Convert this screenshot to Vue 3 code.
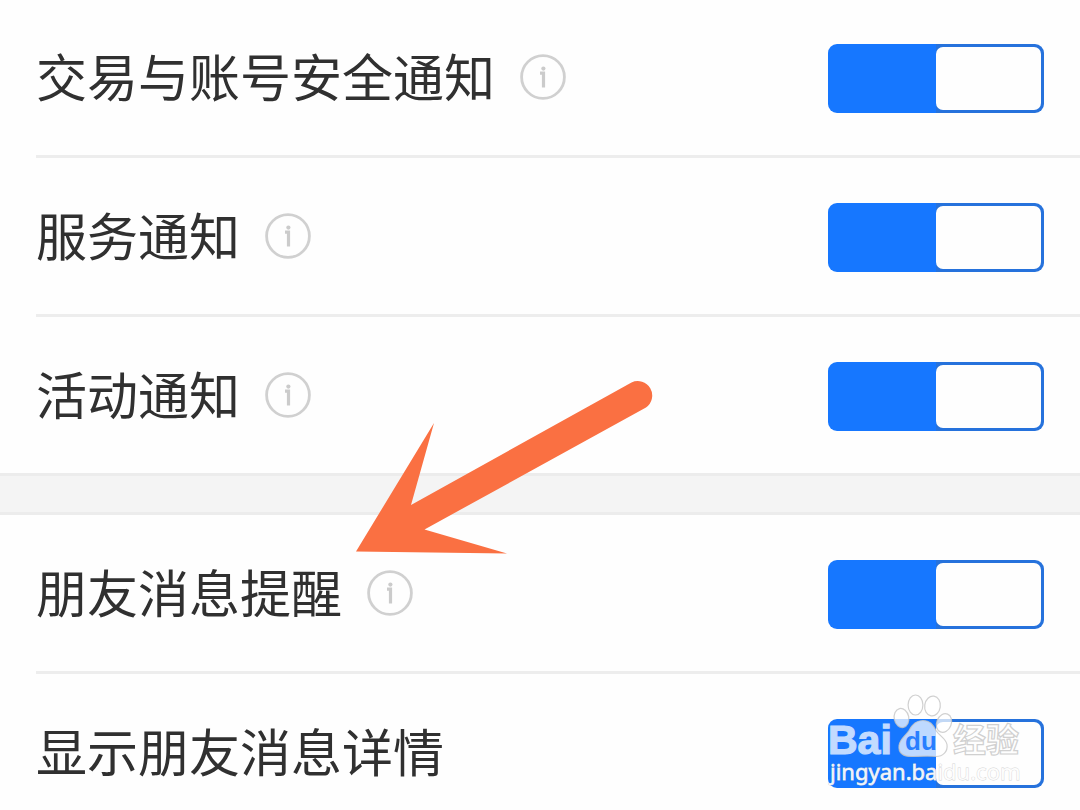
<script setup>
import { ref } from 'vue'

const groups = ref([
  [
    { id: 'trade', label: '交易与账号安全通知', info: true, on: true },
    { id: 'service', label: '服务通知', info: true, on: true },
    { id: 'activity', label: '活动通知', info: true, on: true },
  ],
  [
    { id: 'friend', label: '朋友消息提醒', info: true, on: true },
    { id: 'detail', label: '显示朋友消息详情', info: false, on: true, mark: true },
  ],
])
</script>

<template>
  <main class="page">
    <section v-for="(group, g) in groups" :key="g" class="group">
      <div v-for="row in group" :key="row.id" class="row">
        <label class="label" :for="row.id">{{ row.label }}</label>
        <button v-if="row.info" class="info" type="button" :aria-label="row.label">
          <svg viewBox="0 0 46 46" aria-hidden="true">
            <circle cx="23" cy="23" r="21.4" fill="none" stroke="#d0d0d0" stroke-width="2.8" />
            <circle cx="23.4" cy="14.6" r="2.1" fill="#cbcbcb" />
            <path d="M20 19.200h3.500V33.500" fill="none" stroke="#cbcbcb" stroke-width="3.2" />
          </svg>
        </button>
        <div class="control">
          <input :id="row.id" v-model="row.on" class="switch" type="checkbox" role="switch" />
          <svg v-if="row.mark" class="mark" viewBox="0 0 200 100">
            <g fill="#fff" fill-opacity="0.72" stroke="#c4c4c4" stroke-opacity="0.8" stroke-width="1.2">
              <ellipse cx="75.5" cy="26" rx="7.3" ry="9.6" transform="rotate(-12 75.5 26)" />
              <ellipse cx="89.5" cy="13" rx="7.4" ry="10" />
              <ellipse cx="106.5" cy="14" rx="7.8" ry="10" transform="rotate(8 106.5 14)" />
              <ellipse cx="118" cy="31" rx="7.3" ry="9.6" transform="rotate(22 118 31)" />
              <path d="M97 28.5c-7 0-11 4-14 10-3 5-9 8-10 15-1 8 5 11 12 11 6 0 18-1 25 0 7 0 12-5 11-12-1-6-8-9-11-14-3-6-6-10-13-10z" />
              <text class="cjk" x="127" y="60" font-size="33">经验</text>
            </g>
            <g fill="#fff" stroke="#fff" stroke-width="1.2" opacity="0.74">
              <text class="latin" x="2" y="62" font-size="41">Bai</text>
            </g>
            <text class="url" x="4" y="88" font-size="22" fill="#fff" fill-opacity="0.92" stroke="#d4d4d4" stroke-width="0.8" paint-order="stroke">jingyan.baidu.com</text>
            <text class="latin" x="79" y="58" font-size="26" fill="#287fff">du</text>
          </svg>
        </div>
      </div>
    </section>
    <svg class="arrow" viewBox="0 0 300 176" aria-hidden="true">
      <path d="M1 173.5 79 45 56 127 276.500 4.500A14.500 14.500 0 0 1 291 29.500L69.500 151.500 152 175.500Z" fill="#fa7042" />
    </svg>
  </main>
</template>

<style>
body {
  background: #fefefe;
}
</style>

<style scoped>
.page {
  position: relative;
  height: 100vh;
  overflow: hidden;
  background: #fefefe;
  color: #303030;
  font-family: "Noto Sans CJK SC", sans-serif;
}

.group:first-child {
  margin-top: -1px;
}

.group + .group::before {
  content: "";
  display: block;
  box-sizing: border-box;
  height: 42px;
  background: #f4f4f4;
  border: solid #ececec;
  border-width: 3px 0;
}

.row {
  display: flex;
  align-items: center;
  height: 156px;
  margin-left: 36px;
  padding-right: 36px;
}

.row + .row {
  border-top: 3px solid #ededed;
}

.label {
  padding-bottom: 4px;
  font-size: 51px;
  line-height: 72px;
  white-space: nowrap;
}

.info {
  width: 46px;
  height: 46px;
  margin-left: 25px;
  padding: 0;
  border: 0;
  background: none;
}

.info svg {
  display: block;
}

.control {
  position: relative;
  margin: 3px 0 0 auto;
}

.switch {
  display: block;
  appearance: none;
  box-sizing: border-box;
  width: 216px;
  height: 69px;
  margin: 0;
  padding: 3px;
  border-radius: 9px;
  background: linear-gradient(to right, #1677ff 50%, #2672dc 50%);
}

.switch::before {
  content: "";
  display: block;
  width: 50%;
  height: 100%;
  border-radius: 7px;
  background: #fefefe;
}

.switch:checked::before {
  margin-left: auto;
}

.mark {
  position: absolute;
  left: -2px;
  bottom: -4px;
  width: 200px;
  height: 100px;
  pointer-events: none;
}

.latin {
  font-family: "Liberation Sans", sans-serif;
  font-weight: 700;
}

.cjk {
  font-family: "Noto Sans CJK SC", sans-serif;
  font-weight: 700;
}

.url {
  font-family: "Noto Sans", sans-serif;
}

.arrow {
  position: absolute;
  top: 378px;
  left: 355px;
  width: 300px;
  height: 176px;
  pointer-events: none;
}
</style>
